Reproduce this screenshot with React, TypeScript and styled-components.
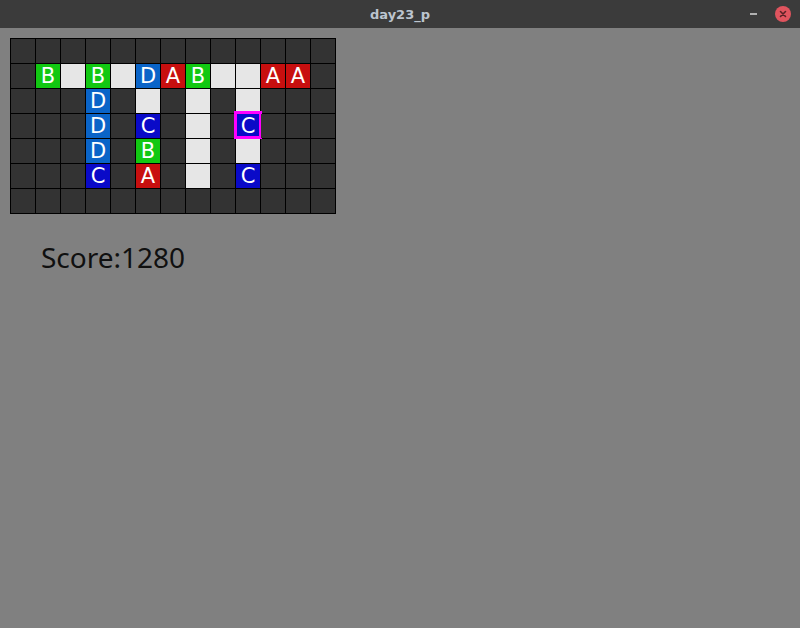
import React from "react";
import styled, { createGlobalStyle } from "styled-components";

const Global = createGlobalStyle`
  html, body { margin: 0; padding: 0; background: #808080; }
  body { width: 800px; height: 628px; overflow: hidden; }
`;

const Window = styled.div`
  width: 800px;
  height: 628px;
  display: flex;
  flex-direction: column;
  background: #808080;
`;

const TitleBar = styled.div`
  height: 28px;
  flex: none;
  background: #3b3b3b;
  display: flex;
  align-items: center;
  justify-content: center;
  position: relative;
`;

const Title = styled.div`
  font-family: "DejaVu Sans", "Noto Sans", sans-serif;
  font-weight: bold;
  font-size: 13px;
  color: #bcc5cf;
  letter-spacing: 0;
`;

const Controls = styled.div`
  position: absolute;
  right: 9px;
  top: 6px;
  display: flex;
  align-items: center;
  gap: 18px;
`;

const Minimize = styled.div`
  width: 7px;
  height: 2px;
  background: #b0b0b0;
`;

const Close = styled.div`
  width: 16px;
  height: 16px;
  border-radius: 50%;
  background: #e0545e;
  display: flex;
  align-items: center;
  justify-content: center;
`;

const Content = styled.div`
  padding: 10px;
  display: flex;
  flex-direction: column;
  align-items: flex-start;
`;

const Board = styled.div`
  display: grid;
  grid-template-columns: repeat(13, 24px);
  grid-auto-rows: 24px;
  gap: 1px;
  padding: 1px;
  background: #000;
`;

const palette: Record<string, string> = {
  ".": "#333333",
  "_": "#e6e6e6",
  A: "#c80f0f",
  B: "#12c812",
  C: "#0a0ac8",
  D: "#0a64c8",
};

const Cell = styled.div<{ $kind: string }>`
  position: relative;
  background: ${(p) => palette[p.$kind]};
  color: #ffffff;
  font-family: "DejaVu Sans", "Noto Sans", sans-serif;
  font-size: 21px;
  line-height: 24px;
  display: flex;
  align-items: center;
  justify-content: center;
`;

const Highlight = styled.div`
  position: absolute;
  left: -2px;
  top: -3px;
  width: 22px;
  height: 22px;
  border: 3px solid #ff00ff;
  pointer-events: none;
`;

const Score = styled.div`
  margin-top: 28px;
  margin-left: 31px;
  font-family: "Noto Sans", "Open Sans", sans-serif;
  font-size: 28px;
  line-height: 30px;
  color: #101010;
`;

const rows = [
  ".............",
  ".B_B_DAB__AA.",
  "...D._._._...",
  "...D.C._.C...",
  "...D.B._._...",
  "...C.A._.C...",
  ".............",
];

export default function App() {
  return (
    <>
      <Global />
      <Window>
        <TitleBar>
          <Title>day23_p</Title>
          <Controls>
            <Minimize />
            <Close>
              <svg width="8" height="8" viewBox="0 0 8 8">
                <path d="M1.5 1.5 L6.5 6.5 M6.5 1.5 L1.5 6.5" stroke="#5a2226" strokeWidth="1.6" strokeLinecap="round" />
              </svg>
            </Close>
          </Controls>
        </TitleBar>
        <Content>
          <Board>
            {rows.map((row, r) =>
              row.split("").map((k, c) => (
                <Cell key={`${r}-${c}`} $kind={k}>
                  {k === "." || k === "_" ? "" : k}
                  {r === 3 && c === 9 ? <Highlight /> : null}
                </Cell>
              ))
            )}
          </Board>
          <Score>Score:1280</Score>
        </Content>
      </Window>
    </>
  );
}
